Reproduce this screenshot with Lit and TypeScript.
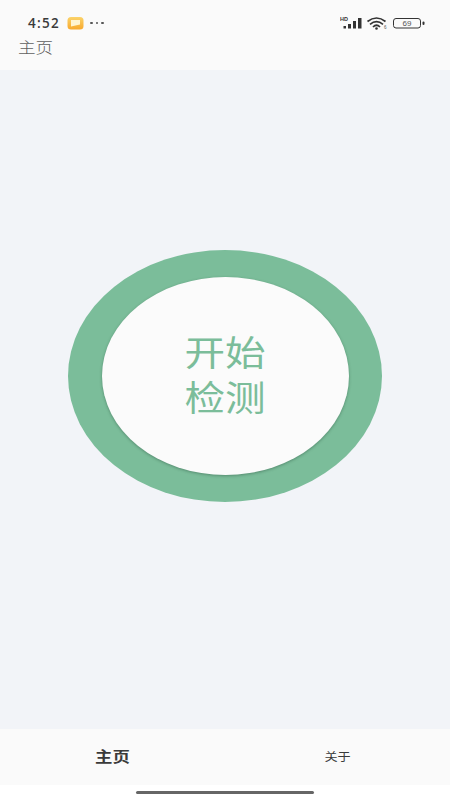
import { LitElement, html, css } from "lit";
import { customElement } from "lit/decorators.js";

@customElement("app-root")
export class AppRoot extends LitElement {
  static styles = css`
    :host {
      display: flex;
      flex-direction: column;
      width: 450px;
      height: 800px;
      background: #ffffff;
      font-family: "Noto Sans CJK SC", "Noto Sans", sans-serif;
      overflow: hidden;
    }
    .top {
      height: 70px;
      flex: none;
      background: #fafafa;
      display: flex;
      flex-direction: column;
    }
    .status {
      height: 36px;
      flex: none;
      display: flex;
      align-items: center;
      justify-content: space-between;
      padding: 10px 24px 0 28px;
      box-sizing: border-box;
    }
    .status-left,
    .status-right {
      display: flex;
      align-items: center;
    }
    .time {
      font-family: "Open Sans", sans-serif;
      font-size: 13.5px;
      font-weight: 600;
      letter-spacing: 1.3px;
      color: #3a3a3a;
      line-height: 20px;
      margin-right: 7px;
    }
    .dots {
      margin-left: 6px;
      display: flex;
      gap: 3px;
    }
    .dots i {
      width: 2.5px;
      height: 2.5px;
      border-radius: 50%;
      background: #555;
    }
    .title {
      width: max-content;
      margin: 1px 0 0 18px;
      font-size: 15px;
      font-weight: 300;
      line-height: 20px;
      color: #5f5f5f;
      transform: scaleX(1.17);
      transform-origin: left center;
    }
    .main {
      flex: 1;
      background: #f2f4f8;
      display: flex;
      align-items: center;
      justify-content: center;
      padding-bottom: 47px;
    }
    .outer {
      width: 314px;
      height: 252px;
      border-radius: 50%;
      background: #7bbd9a;
      display: flex;
      align-items: center;
      justify-content: center;
    }
    .inner {
      width: 247px;
      height: 198px;
      border-radius: 50%;
      background: #fbfbfb;
      box-shadow: 0 1px 3px rgba(40, 80, 60, 0.45);
      color: #7bbd9a;
      display: flex;
      align-items: center;
      justify-content: center;
    }
    .label {
      font-size: 35px;
      line-height: 45px;
      text-align: center;
      padding-bottom: 6px;
      transform: scaleX(1.16);
    }
    .tabs {
      height: 56px;
      flex: none;
      background: #fafafa;
      display: grid;
      grid-template-columns: 1fr 1fr;
      align-items: center;
      justify-items: center;
      color: #3a3a3a;
      padding-bottom: 3px;
      box-sizing: border-box;
    }
    .tab-on {
      font-size: 14.5px;
      font-weight: 700;
      transform: scaleX(1.2);
    }
    .tab-off {
      font-size: 11.5px;
      transform: scaleX(1.14);
    }
    .gesture {
      height: 15px;
      flex: none;
      display: flex;
      align-items: center;
      justify-content: center;
    }
    .gesture i {
      width: 178px;
      height: 3px;
      border-radius: 2px;
      background: #666;
    }
  `;

  render() {
    return html`
      <div class="top">
        <div class="status">
          <div class="status-left">
            <span class="time">4:52</span>
            <svg width="17" height="14" viewBox="0 0 17 14">
              <defs>
                <linearGradient id="g" x1="0" y1="0" x2="0" y2="1">
                  <stop offset="0" stop-color="#fbd36a" />
                  <stop offset="1" stop-color="#f8a92e" />
                </linearGradient>
              </defs>
              <rect x="0.5" y="1" width="16" height="12.5" rx="3.5" fill="url(#g)" />
              <path d="M4 4h9v4.5L4 10.5z" fill="#fff4d2" />
            </svg>
            <span class="dots"><i></i><i></i><i></i></span>
          </div>
          <div class="status-right">
            <svg width="86" height="14" viewBox="0 0 86 14">
              <text x="0" y="5" font-size="5.5" font-weight="700" font-family="Liberation Sans" fill="#333">HD</text>
              <g fill="#333">
                <rect x="3.5" y="10" width="2.5" height="2.5" />
                <rect x="8" y="8" width="3" height="4.5" />
                <rect x="13" y="5" width="3" height="7.5" />
                <rect x="18" y="2" width="3.5" height="10.5" />
              </g>
              <g fill="none" stroke="#333" stroke-width="1.7">
                <path d="M27.5 5.5 Q36.5 -1.5 45.5 5.5" />
                <path d="M30 8.3 Q36.5 3 43 8.3" />
                <path d="M33 11 Q36.5 7.5 40 11" />
              </g>
              <circle cx="36.5" cy="12.5" r="1.3" fill="#333" />
              <text x="44" y="13" font-size="4.5" font-family="Liberation Sans" fill="#555">6</text>
              <rect x="53.5" y="2.5" width="27" height="9.5" rx="2.5" fill="none" stroke="#333" stroke-width="1" />
              <text x="67" y="10.3" font-size="8" text-anchor="middle" font-family="Liberation Sans" fill="#555">69</text>
              <rect x="82.5" y="5.5" width="2" height="3.5" rx="1" fill="#333" />
            </svg>
          </div>
        </div>
        <div class="title">主页</div>
      </div>
      <div class="main">
        <div class="outer">
          <div class="inner">
            <div class="label">
              <div>开始</div>
              <div>检测</div>
            </div>
          </div>
        </div>
      </div>
      <div class="tabs">
        <div class="tab-on">主页</div>
        <div class="tab-off">关于</div>
      </div>
      <div class="gesture"><i></i></div>
    `;
  }
}
